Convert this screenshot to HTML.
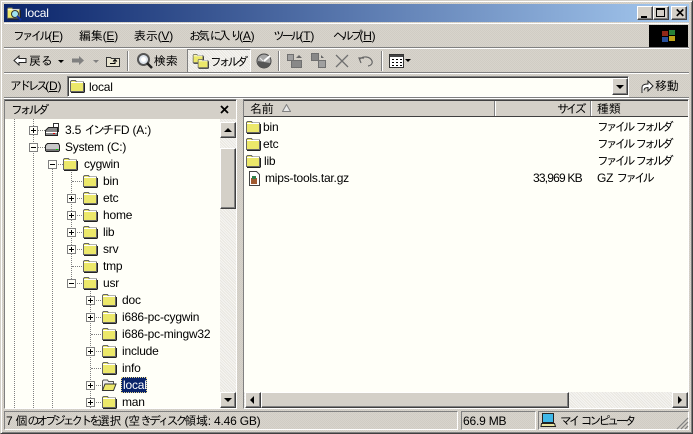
<!DOCTYPE html>
<html><head><meta charset="utf-8"><style>
html,body{margin:0;padding:0}
body{width:693px;height:434px;overflow:hidden;position:relative;background:#d4d0c8;background-image:repeating-conic-gradient(#d8d4cc 0 25%,#d0ccc4 0 50%);background-size:2px 2px;font:12px/14px "Liberation Sans","IPAGothic",sans-serif;color:#000;letter-spacing:-.2px}
.a,.t,svg.a{position:absolute}
.t{white-space:nowrap;line-height:14px}
i{font-style:normal;font-size:12px;letter-spacing:-3.2px}
.b{position:absolute;background:#d4d0c8;box-sizing:border-box;border:1px solid;border-color:#fff #404040 #404040 #fff;box-shadow:inset -1px -1px 0 #808080}
.dh{position:absolute;width:0;border-left:1px dotted #808080}
.dw{position:absolute;height:0;border-top:1px dotted #808080}
.pm{position:absolute;width:9px;height:9px;box-sizing:border-box;border:1px solid #808080;background:#fffff8}
.pm:before{content:"";position:absolute;left:1px;top:3px;width:5px;height:1px;background:#000}
.pm.p:after{content:"";position:absolute;left:3px;top:1px;width:1px;height:5px;background:#000}
.dith{position:absolute;background:#ecebe6;background-image:repeating-linear-gradient(45deg,#e8e6e0 0 1px,#f6f5f2 1px 2px)}
</style></head><body>
<svg width="0" height="0" style="position:absolute"><defs>
<symbol id="f" viewBox="0 0 16 14"><path d="M1.500 12.500V2.500l1-1h4l1 1.500h7v9.500z" fill="#ece86a" stroke="#666" stroke-width="1"/><path d="M2 3.500h12" stroke="#fff" stroke-width="1"/><path d="M15.500 4v9" stroke="#222" stroke-width="1"/><path d="M2 13.500h13.500" stroke="#222" stroke-width="1"/></symbol>
<symbol id="o" viewBox="0 0 16 14"><path d="M1.500 12.500V3l1-1h4l1 1.500h5v2" fill="#eee" stroke="#555"/><path d="M1.500 12.500l2.500-6.500h11l-2.500 6.500z" fill="#ece86a" stroke="#333"/></symbol>
</defs></svg>

<!-- window frame -->
<div class="a" style="left:0;top:0;width:693px;height:434px;box-sizing:border-box;border:1px solid;border-color:#d4d0c8 #404040 #404040 #d4d0c8;box-shadow:inset 1px 1px 0 #fff,inset -1px -1px 0 #808080"></div>

<!-- title bar -->
<div class="a" style="left:4px;top:4px;width:685px;height:18px;background:linear-gradient(90deg,#0a246a,#a6caf0)"></div>
<svg class="a" style="left:6px;top:5px" width="16" height="16"><use href="#f" width="15" height="14" y="1"/><circle cx="9" cy="9" r="3.500" fill="#9fe3f0" stroke="#333"/><path d="M11 11l4 4" stroke="#1030a0" stroke-width="2"/></svg>
<div class="t" style="left:25px;top:6px;color:#fff;font-size:12px">local</div>
<div class="b" style="left:637px;top:6px;width:16px;height:14px"><div class="a" style="left:3px;top:9px;width:6px;height:2px;background:#000"></div></div>
<div class="b" style="left:653px;top:6px;width:16px;height:14px"><div class="a" style="left:2px;top:1px;width:9px;height:9px;box-sizing:border-box;border:1px solid #000;border-top-width:2px"></div></div>
<div class="b" style="left:671px;top:6px;width:16px;height:14px"><div class="t" style="left:3px;top:-1px;font-weight:bold;font-size:12px">✕</div></div>

<!-- menu bar -->
<div class="a" style="left:4px;top:23px;width:685px;height:1px;background:#fff"></div>
<div class="a" style="left:4px;top:47px;width:685px;height:1px;background:#808080"></div>
<div class="a" style="left:4px;top:48px;width:685px;height:1px;background:#fff"></div>
<div class="t" style="left:13px;top:29px"><i>ファイル</i>(<u>F</u>)</div>
<div class="t" style="left:79px;top:29px">編集(<u>E</u>)</div>
<div class="t" style="left:134px;top:29px">表示(<u>V</u>)</div>
<div class="t" style="left:189px;top:29px"><i>お</i>気<i>に</i>入<i>り</i>(<u>A</u>)</div>
<div class="t" style="left:273px;top:29px"><i>ツール</i>(<u>T</u>)</div>
<div class="t" style="left:333px;top:29px"><i>ヘルプ</i>(<u>H</u>)</div>
<div class="a" style="left:649px;top:25px;width:39px;height:22px;background:#000"></div>
<svg class="a" style="left:660px;top:28px" width="18" height="16"><path d="M2 3h6v5H2z" fill="#902818"/><path d="M9 2h6v5H9z" fill="#288038"/><path d="M2 9h6v5H2z" fill="#284f9c"/><path d="M9 8h6v5H9z" fill="#c0a418"/></svg>

<!-- toolbar -->
<svg class="a" style="left:13px;top:54px" width="14" height="13"><path d="M1 6.500L6 2v2.500h7v4H6V11z" fill="#fff" stroke="#222"/></svg>
<div class="t" style="left:29px;top:54px">戻<i>る</i></div>
<div class="a" style="left:58px;top:60px;border:3px solid transparent;border-top:3px solid #000;border-bottom:0"></div>
<svg class="a" style="left:71px;top:54px" width="14" height="13"><path d="M13 6.500L8 2v2.500H1v4h7V11z" fill="#808080"/></svg>
<div class="a" style="left:93px;top:60px;border:3px solid transparent;border-top:3px solid #808080;border-bottom:0"></div>
<svg class="a" style="left:105px;top:53px" width="16" height="15"><path d="M1.500 4.500h4l1 1h8v8h-13z" fill="#e8e4d0" stroke="#333"/><path d="M5 10.500h5V7M8 8.500l2-2 2 2" fill="none" stroke="#000"/></svg>
<div class="a" style="left:127px;top:51px;width:1px;height:20px;background:#808080;box-shadow:1px 0 0 #fff"></div>
<svg class="a" style="left:136px;top:52px" width="17" height="17"><circle cx="7.500" cy="7.500" r="5.500" fill="#dfe6ee" stroke="#555" stroke-width="2"/><circle cx="7.500" cy="7.500" r="2.500" fill="#fff"/><path d="M11 11l5 5" stroke="#222" stroke-width="2.500"/></svg>
<div class="t" style="left:154px;top:54px">検索</div>
<div class="dith" style="left:187px;top:49px;width:64px;height:24px;box-sizing:border-box;border:1px solid;border-color:#808080 #fff #fff #808080"></div>
<svg class="a" style="left:192px;top:53px" width="18" height="16"><use href="#f" width="12" height="11"/><use href="#f" x="5" y="5" width="12" height="11"/></svg>
<div class="t" style="left:210px;top:55px"><i>フォルダ</i></div>
<svg class="a" style="left:255px;top:52px" width="18" height="18"><circle cx="9" cy="9" r="7" fill="#a8a8a8" stroke="#444"/><path d="M9 9L15 4" stroke="#fff" stroke-width="2"/><path d="M3 9a6 6 0 0 0 12 2z" fill="#555"/><path d="M5 6l3 3" stroke="#eee"/></svg>
<div class="a" style="left:278px;top:51px;width:1px;height:20px;background:#808080;box-shadow:1px 0 0 #fff"></div>
<svg class="a" style="left:286px;top:52px" width="17" height="17" fill="#a0a0a0" stroke="#707070"><path d="M1.500 2.500h6v6h-6z"/><path d="M5.500 8.500h10v7h-10z" fill="#888"/><path d="M10 6l3-3 3 3z" fill="#666" stroke="none"/></svg>
<svg class="a" style="left:310px;top:52px" width="17" height="17" fill="#a0a0a0" stroke="#707070"><path d="M1.500 1.500h7v7h-7z" fill="#888"/><path d="M8.500 8.500h7v7h-7z"/><path d="M11 3l3 3-3 0z" fill="#666" stroke="none"/></svg>
<svg class="a" style="left:335px;top:54px" width="14" height="14"><path d="M1 1l12 12M13 1L1 13" stroke="#707070" stroke-width="1.300"/></svg>
<svg class="a" style="left:358px;top:54px" width="16" height="14"><path d="M3 9l-2-5h5M2 5c3-3 10-3 12 2 1 3-2 5-4 5" fill="none" stroke="#666" stroke-width="1.200"/></svg>
<div class="a" style="left:381px;top:51px;width:1px;height:20px;background:#808080;box-shadow:1px 0 0 #fff"></div>
<svg class="a" style="left:389px;top:53px" width="16" height="15"><path d="M.5 1.500h14v13H.5z" fill="#fff" stroke="#333"/><path d="M1 2h13v2H1z" fill="#444"/><path d="M3 6h2v1H3zM7 6h2v1H7zM11 6h2v1h-2zM3 9h2v1H3zM7 9h2v1H7zM11 9h2v1h-2zM3 12h2v1H3zM7 12h2v1H7zM11 12h2v1h-2z" fill="#000"/></svg>
<div class="a" style="left:405px;top:59px;border:3px solid transparent;border-top:3px solid #000;border-bottom:0"></div>

<!-- address -->
<div class="a" style="left:4px;top:72px;width:685px;height:1px;background:#808080"></div>
<div class="a" style="left:4px;top:73px;width:685px;height:1px;background:#fff"></div>
<div class="t" style="left:10px;top:79px"><i>アドレス</i>(<u>D</u>)</div>
<div class="a" style="left:67px;top:76px;width:562px;height:21px;box-sizing:border-box;background:#fffff8;border:1px solid;border-color:#808080 #fff #fff #808080;box-shadow:inset 1px 1px 0 #404040"></div>
<svg class="a" style="left:69px;top:79px" width="16" height="14"><use href="#f"/></svg>
<div class="t" style="left:89px;top:80px">local</div>
<div class="b" style="left:612px;top:78px;width:16px;height:17px"><div class="a" style="left:3px;top:6px;border:4px solid transparent;border-top:4px solid #000;border-bottom:0"></div></div>
<svg class="a" style="left:640px;top:79px" width="14" height="15"><path d="M2 14V9c0-3 2-4 6-4V2l5 5-5 5V8.500c-3 0-4 1-4 3" fill="#fff" stroke="#222"/></svg>
<div class="t" style="left:655px;top:79px">移動</div>
<div class="a" style="left:4px;top:97px;width:685px;height:1px;background:#808080"></div>
<div class="a" style="left:4px;top:98px;width:685px;height:1px;background:#fff"></div>

<!-- left pane -->
<div class="a" style="left:4px;top:99px;width:233px;height:310px;box-sizing:border-box;border:1px solid;border-color:#808080 #fff #fff #808080;background:#fffff8"></div>
<div class="a" style="left:5px;top:100px;width:231px;height:19px;background:#d4d0c8;border-top:1px solid #404040;box-sizing:border-box"></div>
<div class="t" style="left:11px;top:103px"><i>フォルダ</i></div>
<svg class="a" style="left:220px;top:105px" width="9" height="9"><path d="M1 1l7 7M8 1L1 8" stroke="#000" stroke-width="1.800"/></svg>

<!-- tree lines -->
<div class="dh" style="left:14px;top:119px;height:289px"></div>
<div class="dh" style="left:33px;top:119px;height:289px"></div>
<div class="dh" style="left:52px;top:164px;height:244px"></div>
<div class="dh" style="left:71px;top:170px;height:113px"></div>
<div class="dh" style="left:90px;top:289px;height:119px"></div>
<div class="dw" style="left:34px;top:130px;width:11px"></div>
<div class="dw" style="left:34px;top:147px;width:11px"></div>
<div class="dw" style="left:53px;top:164px;width:10px"></div>
<div class="dw" style="left:72px;top:181px;width:10px"></div><div class="dw" style="left:72px;top:198px;width:10px"></div><div class="dw" style="left:72px;top:215px;width:10px"></div><div class="dw" style="left:72px;top:232px;width:10px"></div><div class="dw" style="left:72px;top:249px;width:10px"></div><div class="dw" style="left:72px;top:266px;width:10px"></div><div class="dw" style="left:72px;top:283px;width:10px"></div>
<div class="dw" style="left:91px;top:300px;width:10px"></div><div class="dw" style="left:91px;top:317px;width:10px"></div><div class="dw" style="left:91px;top:334px;width:10px"></div><div class="dw" style="left:91px;top:351px;width:10px"></div><div class="dw" style="left:91px;top:368px;width:10px"></div><div class="dw" style="left:91px;top:385px;width:10px"></div><div class="dw" style="left:91px;top:402px;width:10px"></div>

<!-- expanders -->
<div class="pm p" style="left:29px;top:126px"></div>
<div class="pm" style="left:29px;top:143px"></div>
<div class="pm" style="left:48px;top:160px"></div>
<div class="pm p" style="left:67px;top:194px"></div><div class="pm p" style="left:67px;top:211px"></div><div class="pm p" style="left:67px;top:228px"></div><div class="pm p" style="left:67px;top:245px"></div>
<div class="pm" style="left:67px;top:279px"></div>
<div class="pm p" style="left:86px;top:296px"></div><div class="pm p" style="left:86px;top:313px"></div><div class="pm p" style="left:86px;top:347px"></div><div class="pm p" style="left:86px;top:381px"></div><div class="pm p" style="left:86px;top:398px"></div>

<!-- drive icons -->
<svg class="a" style="left:44px;top:122px" width="17" height="16"><path d="M9.500 1.500h5v8h-5z" fill="#fff" stroke="#333"/><path d="M1.500 8.500l3-3h9v8h-12z" fill="#888" stroke="#222"/><path d="M2 10.500h11" stroke="#fff"/><path d="M9 11h2v1H9z" fill="#e00000"/></svg>
<svg class="a" style="left:44px;top:142px" width="17" height="11"><path d="M1.500 3.500l2-2h11l1 2v5l-1 1h-12l-1-1z" fill="#c8c8c8" stroke="#222"/><path d="M2 7h13v2H2z" fill="#777"/><path d="M12 7h2v1h-2z" fill="#0c0"/></svg>

<!-- tree folders -->
<svg class="a" style="left:0;top:0;overflow:visible" width="693" height="434">
<use href="#f" x="62" y="157" width="16" height="14"/>
<use href="#f" x="82" y="174" width="16" height="14"/><use href="#f" x="82" y="191" width="16" height="14"/><use href="#f" x="82" y="208" width="16" height="14"/><use href="#f" x="82" y="225" width="16" height="14"/><use href="#f" x="82" y="242" width="16" height="14"/><use href="#f" x="82" y="259" width="16" height="14"/><use href="#f" x="82" y="276" width="16" height="14"/>
<use href="#f" x="101" y="293" width="16" height="14"/><use href="#f" x="101" y="310" width="16" height="14"/><use href="#f" x="101" y="327" width="16" height="14"/><use href="#f" x="101" y="344" width="16" height="14"/><use href="#f" x="101" y="361" width="16" height="14"/><use href="#o" x="101" y="378" width="16" height="14"/><use href="#f" x="101" y="395" width="16" height="14"/>
</svg>

<div class="t" style="left:65px;top:123px">3.5 <i>インチ</i> FD (A:)</div>
<div class="t" style="left:65px;top:140px">System (C:)</div>
<div class="t" style="left:84px;top:157px">cygwin</div>
<div class="t" style="left:103px;top:174px">bin</div>
<div class="t" style="left:103px;top:191px">etc</div>
<div class="t" style="left:103px;top:208px">home</div>
<div class="t" style="left:103px;top:225px">lib</div>
<div class="t" style="left:103px;top:242px">srv</div>
<div class="t" style="left:103px;top:259px">tmp</div>
<div class="t" style="left:103px;top:276px">usr</div>
<div class="t" style="left:122px;top:293px">doc</div>
<div class="t" style="left:122px;top:310px">i686-pc-cygwin</div>
<div class="t" style="left:122px;top:327px">i686-pc-mingw32</div>
<div class="t" style="left:122px;top:344px">include</div>
<div class="t" style="left:122px;top:361px">info</div>
<div class="a" style="left:121px;top:377px;width:26px;height:16px;background:#0a246a;box-sizing:border-box;border:1px dotted #e8d890"></div>
<div class="t" style="left:123px;top:378px;color:#fff">local</div>
<div class="t" style="left:122px;top:395px">man</div>

<!-- tree scrollbar -->
<div class="dith" style="left:220px;top:119px;width:16px;height:289px"></div>
<div class="b" style="left:220px;top:122px;width:16px;height:16px"><div class="a" style="left:3px;top:5px;border:4px solid transparent;border-bottom:4px solid #000;border-top:0"></div></div>
<div class="b" style="left:220px;top:148px;width:16px;height:61px"></div>
<div class="b" style="left:220px;top:392px;width:16px;height:16px"><div class="a" style="left:3px;top:5px;border:4px solid transparent;border-top:4px solid #000;border-bottom:0"></div></div>

<!-- right pane -->
<div class="a" style="left:243px;top:99px;width:446px;height:310px;box-sizing:border-box;border:1px solid;border-color:#808080 #fff #fff #808080;background:#fffff8"></div>
<div class="a" style="left:244px;top:100px;width:444px;height:17px;background:#d4d0c8;border-top:1px solid #404040;border-bottom:1px solid #404040;box-sizing:border-box"></div>
<div class="a" style="left:494px;top:101px;width:1px;height:15px;background:#808080;box-shadow:1px 0 0 #fff"></div>
<div class="a" style="left:590px;top:101px;width:1px;height:15px;background:#808080;box-shadow:1px 0 0 #fff"></div>
<div class="t" style="left:250px;top:102px">名前</div>
<svg class="a" style="left:282px;top:104px" width="9" height="8"><path d="M.5 7.500L4.500 .5l4 7z" fill="#e8e8e8" stroke="#808080"/></svg>
<div class="t" style="left:557px;top:102px"><i>サイズ</i></div>
<div class="t" style="left:597px;top:102px">種類</div>

<svg class="a" style="left:0;top:0;overflow:visible" width="693" height="434">
<use href="#f" x="245" y="120" width="16" height="14"/><use href="#f" x="245" y="137" width="16" height="14"/><use href="#f" x="245" y="154" width="16" height="14"/>
</svg>
<svg class="a" style="left:247px;top:171px" width="15" height="15"><path d="M2.500 .5h7l3 3v11h-10z" fill="#fff" stroke="#444"/><path d="M4 7h6v6H4z" fill="#a05a30"/><path d="M5 5h4v3H5z" fill="#30804a"/></svg>
<div class="t" style="left:263px;top:120px">bin</div>
<div class="t" style="left:263px;top:137px">etc</div>
<div class="t" style="left:264px;top:154px">lib</div>
<div class="t" style="left:265px;top:171px">mips-tools.tar.gz</div>
<div class="t" style="left:533px;top:171px;letter-spacing:-.8px">33,969 KB</div>
<div class="t" style="left:597px;top:120px"><i>ファイル</i> <i>フォルダ</i></div>
<div class="t" style="left:597px;top:137px"><i>ファイル</i> <i>フォルダ</i></div>
<div class="t" style="left:597px;top:154px"><i>ファイル</i> <i>フォルダ</i></div>
<div class="t" style="left:597px;top:171px">GZ <i>ファイル</i></div>

<!-- horizontal scrollbar -->
<div class="dith" style="left:244px;top:392px;width:444px;height:16px"></div>
<div class="b" style="left:245px;top:392px;width:16px;height:16px"><div class="a" style="left:4px;top:3px;border:4px solid transparent;border-right:4px solid #000;border-left:0"></div></div>
<div class="b" style="left:261px;top:392px;width:308px;height:16px"></div>
<div class="b" style="left:672px;top:392px;width:16px;height:16px"><div class="a" style="left:5px;top:3px;border:4px solid transparent;border-left:4px solid #000;border-right:0"></div></div>

<!-- status bar -->
<div class="a" style="left:4px;top:411px;width:454px;height:19px;box-sizing:border-box;border:1px solid;border-color:#808080 #fff #fff #808080"></div>
<div class="a" style="left:461px;top:411px;width:75px;height:19px;box-sizing:border-box;border:1px solid;border-color:#808080 #fff #fff #808080"></div>
<div class="a" style="left:538px;top:411px;width:151px;height:19px;box-sizing:border-box;border:1px solid;border-color:#808080 #fff #fff #808080"></div>
<div class="t" style="left:6px;top:414px">7 個<i>のオブジェクトを</i>選択 (空<i>きディスク</i>領域: 4.46 GB)</div>
<div class="t" style="left:463px;top:414px">66.9 MB</div>
<svg class="a" style="left:540px;top:412px" width="17" height="17"><path d="M2.500 1.500h11v9h-11z" fill="#40b8e8" stroke="#222"/><path d="M1.500 11.500h13l1 3H1z" fill="#e8e4a0" stroke="#222"/></svg>
<div class="t" style="left:560px;top:414px"><i>マイ</i> <i>コンピュータ</i></div>
<svg class="a" style="left:675px;top:416px" width="14" height="14"><path d="M13 2L2 13M13 6l-7 7M13 10l-3 3" stroke="#808080" stroke-width="1.200"/></svg>
</body></html>
